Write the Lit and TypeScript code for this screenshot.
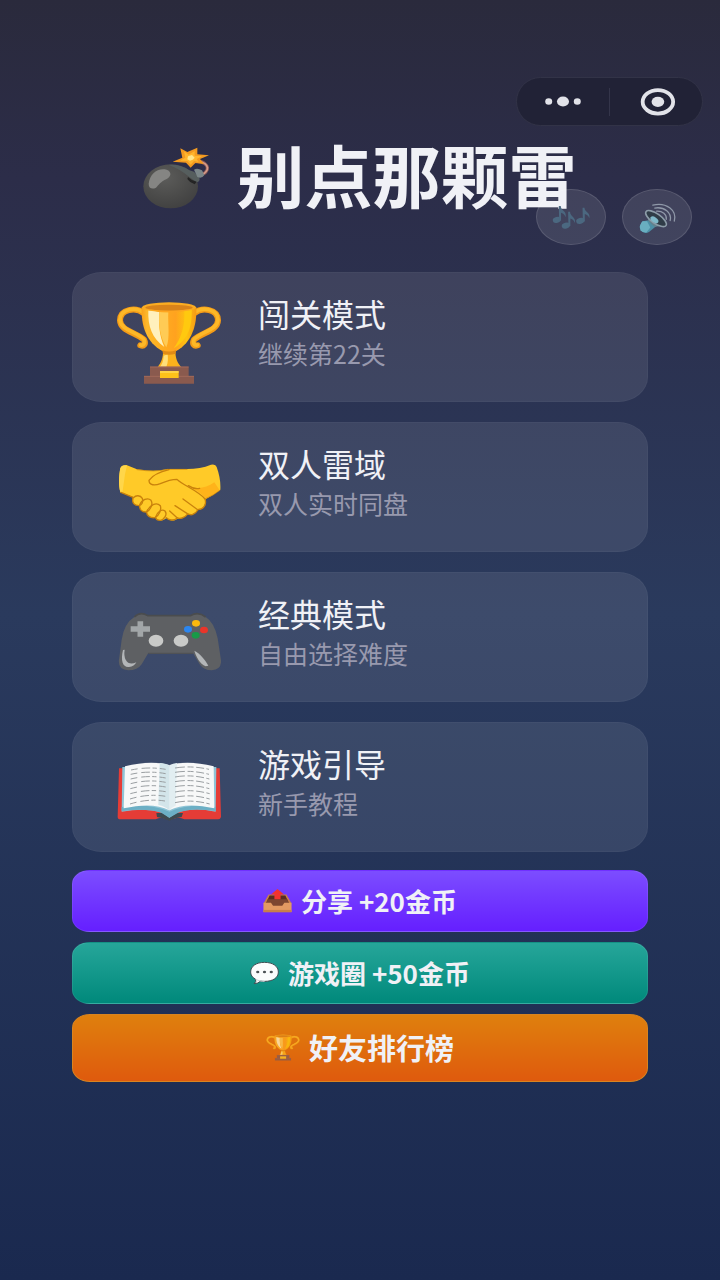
import { LitElement, html, css, svg, TemplateResult } from "lit";
import { customElement, state } from "lit/decorators.js";

interface ModeCard {
  title: string;
  subtitle: string;
  icon: TemplateResult;
}

interface ActionButton {
  label: string;
  kind: string;
  icon: TemplateResult;
}

const trophyShapes = svg`
  <defs>
    <linearGradient id="cup" x1="0" x2="1">
      <stop offset="0" stop-color="#f9a11c" />
      <stop offset="0.1" stop-color="#fdb92c" />
      <stop offset="0.3" stop-color="#ffb020" />
      <stop offset="0.62" stop-color="#ffa21f" />
      <stop offset="0.82" stop-color="#fec20f" />
      <stop offset="1" stop-color="#f59a16" />
    </linearGradient>
  </defs>
  <g fill="none" stroke-linecap="round" stroke-linejoin="round">
    <path d="M250 156C226 138 180 144 179 178C180 210 228 214 251 236C258 250 250 257 240 253" stroke="#f39a17" stroke-width="18" />
    <path d="M249 154C226 137 180 143 179 176C180 207 228 212 250 234C256 246 250 254 241 252" stroke="#fdb827" stroke-width="11" />
    <path d="M402 156C426 138 472 144 473 178C472 210 424 214 401 236C394 250 402 257 412 253" stroke="#f39a17" stroke-width="18" />
    <path d="M403 154C426 137 472 143 473 176C472 207 424 212 402 234C396 246 402 254 411 252" stroke="#fdb827" stroke-width="11" />
  </g>
  <path d="M308 268H345C345 292 351 306 364 320H291C303 304 309 290 308 268Z" fill="#fcb21c" />
  <path d="M310 284C309 300 305 310 298 318H318C324 304 323 292 322 280Z" fill="#ffe07a" />
  <path d="M244 138C242 195 258 244 306 270Q326 279 348 270C394 244 410 195 408 138Z" fill="url(#cup)" />
  <path d="M264 148C262 196 275 232 312 258C297 224 294 190 297 150Z" fill="#fff0bd" />
  <path d="M297 150C294 192 299 228 318 259C330 232 322 188 324 152Z" fill="#ffcb55" />
  <path d="M372 150C374 196 362 232 340 262C384 236 396 196 394 144Z" fill="#ffc90f" />
  <ellipse cx="326" cy="139" rx="81" ry="15" fill="#fbac22" />
  <ellipse cx="326" cy="140" rx="71" ry="9" fill="#d9831a" />
  <path d="M258 143Q326 156 394 143Q326 165 258 143Z" fill="#ffa51f" />
  <path d="M306 268Q326 275 347 268L346 278Q326 284 308 278Z" fill="#e18b16" />
  <path d="M269 317H385V345H401V368H251V345H269Z" fill="#8a5a4e" />
  <path d="M251 346H401M269 318H385" stroke="#a2695a" stroke-width="3" />
  <rect x="299" y="330" width="56" height="21" fill="#fdc11a" />
  <path d="M299 333H355" stroke="#ffdc5c" stroke-width="4" />
`;

const trophyIcon = html`
  <svg viewBox="170 120 312 252" aria-hidden="true">${trophyShapes}</svg>
`;

const handshakeIcon = html`
  <svg viewBox="170 120 312 252" aria-hidden="true">
    <path d="M180 172Q184 160 200 163L230 175Q284 184 322 174H380Q420 174 452 161Q466 158 469 168Q482 204 480 236Q460 252 436 264C434 284 432 294 412 297C404 308 394 312 381 310C374 322 360 322 350 324C338 332 326 328 318 321C308 332 294 330 286 320C270 322 260 314 259 303C246 304 238 296 238 284C222 284 214 276 218 258L180 244C174 220 176 192 180 172Z" fill="#ffca28" />
    <path d="M390 228C416 234 440 230 462 214L478 238Q460 252 436 264C430 252 408 238 390 228Z" fill="#ffb31a" />
    <path d="M180 172Q184 160 200 163L194 190L186 246L180 244C174 220 176 192 180 172Z" fill="#ffd64a" />
    <g fill="none" stroke="#c9820c" stroke-width="4" stroke-linecap="round" stroke-linejoin="round">
      <path d="M326 176C300 182 276 194 266 208C266 224 284 224 300 218C318 210 334 205 350 205C366 222 416 240 434 264C440 282 428 296 412 296L368 264" />
      <path d="M384 224C396 232 408 234 418 232" />
      <path d="M412 297C404 312 392 314 381 308L344 284" />
      <path d="M381 310C372 322 358 324 350 320L328 300" />
      <path d="M350 322C340 330 326 328 318 320" />
      <path d="M182 244L220 260C226 252 240 252 246 262C250 274 244 282 236 284C222 284 214 276 218 260" />
      <path d="M238 282C244 266 262 258 272 268C280 280 268 300 258 303C246 304 236 296 238 282" />
      <path d="M259 302C268 282 288 272 300 284C304 296 296 314 284 320C270 322 258 314 259 302" />
      <path d="M286 318C290 304 304 292 314 300C322 310 312 326 300 328C292 328 286 324 286 318" />
      <path d="M230 176Q284 184 322 175H380" stroke-width="2" />
      <path d="M434 264Q462 252 479 238" stroke-width="2" />
    </g>
  </svg>
`;

const gamepadIcon = html`
  <svg viewBox="170 120 312 252" aria-hidden="true">
    <path d="M222 168Q240 150 262 164H390Q414 150 436 168Q462 184 472 232L482 298Q484 326 454 328Q430 328 418 310L398 276H264L244 310Q232 328 204 328Q172 326 176 296L184 236Q192 186 222 168Z" fill="#5e6063" />
    <path d="M222 168Q240 150 262 164H390Q414 150 436 168" fill="none" stroke="#4a4c4e" stroke-width="5" />
    <path d="M264 277H398" stroke="#505255" stroke-width="4" />
    <path d="M240 181V227M211 204H269" stroke="#a2a6a8" stroke-width="17" />
    <ellipse cx="287" cy="239" rx="22" ry="18" fill="#c9cac8" />
    <ellipse cx="362" cy="239" rx="22" ry="18" fill="#c9cac8" />
    <ellipse cx="407" cy="187" rx="12" ry="10" fill="#fbb90e" />
    <ellipse cx="383" cy="205" rx="12" ry="10" fill="#2b86f0" />
    <ellipse cx="431" cy="207" rx="12" ry="10" fill="#ea3529" />
    <ellipse cx="406" cy="223" rx="12" ry="10" fill="#189a48" />
    <path d="M188 267C180 300 188 320 206 318Q222 316 228 304Q206 314 196 296Q190 284 193 266Z" fill="#b3b6b8" />
    <path d="M402 269C408 288 418 308 436 316L444 314C434 296 420 278 402 269Z" fill="#b3b6b8" />
  </svg>
`;

const bookIcon = html`
  <svg viewBox="170 120 312 252" aria-hidden="true">
    <path d="M176 172H478L482 318Q480 326 472 325H372Q352 314 327 328Q304 314 286 325H180Q172 325 172 318Z" fill="#e53c36" />
    <path d="M288 306H368L364 318Q344 320 327 329Q308 320 290 318Z" fill="#3c4a50" />
    <path d="M186 168H468L466 302Q400 288 352 304L327 320L304 304Q256 290 184 302Z" fill="#8fc4d6" />
    <path d="M184 288Q270 276 327 302Q386 276 466 288V300Q390 288 352 306L327 320L304 306Q262 290 184 300Z" fill="#6cafc5" />
    <path d="M194 166Q270 146 327 162V298Q278 272 190 292Z" fill="#f7f8f8" />
    <path d="M460 166Q384 146 327 162V298Q376 272 462 292Z" fill="#f7f8f8" />
    <path d="M298 156Q316 156 327 164V298Q314 286 294 282Z" fill="#d3e5ea" />
    <path d="M327 164Q338 156 350 156L346 284Q336 288 327 298Z" fill="#e2eef1" />
    <g fill="none" stroke="#9a9fa2" stroke-width="3">
      <path d="M212 177Q264 166 316 175M211 190Q264 178 316 188M211 204Q264 191 316 201M211 218Q264 204 316 214M210 233Q264 218 316 228M210 248Q264 233 316 242M209 264Q264 247 316 256M209 279Q264 262 314 270" stroke-dasharray="20 12 26 7 13 9" />
      <path d="M344 171Q392 163 446 175M344 184Q392 176 446 190M344 198Q392 189 447 204M344 212Q392 203 447 218M344 227Q392 218 447 233M344 243Q392 233 448 248M344 259Q392 248 448 264M344 275Q392 264 448 279" stroke-dasharray="30 8 18 8 24 7" />
    </g>
  </svg>
`;

const bombIcon = html`
  <svg viewBox="45 54 201 186" aria-hidden="true">
    <defs>
      <radialGradient id="iron" cx="0.4" cy="0.3" r="0.75">
        <stop offset="0" stop-color="#5c5c5a" />
        <stop offset="0.6" stop-color="#4b4b4a" />
        <stop offset="1" stop-color="#404040" />
      </radialGradient>
    </defs>
    <path d="M196 98C226 92 248 112 234 128C228 138 216 136 208 130" fill="none" stroke="#8d5c58" stroke-width="10" />
    <path d="M196 98C226 92 248 112 234 128C228 138 216 136 208 130" fill="none" stroke="#d59a88" stroke-width="5" />
    <ellipse cx="128" cy="172" rx="82" ry="66" fill="url(#iron)" />
    <path d="M122 108Q154 104 184 124L198 128L214 146Q218 156 206 160L184 144Q156 120 122 108Z" fill="#565e5e" />
    <path d="M198 122Q208 116 222 124L229 138Q222 150 208 144Z" fill="#7b8688" />
    <path d="M180 144Q192 156 206 158L200 166Q186 162 178 150Z" fill="#242424" />
    <path d="M62 164C66 134 88 116 116 122C132 128 130 142 116 150C98 158 92 168 84 176C72 182 62 178 62 164Z" fill="#858583" />
    <path d="M157 58L178 69L208 56L208 76L243 79L216 90L228 105L202 102L188 116L174 101L134 98L163 86Z" fill="#f39a20" />
    <path d="M168 67L182 77L200 66L200 80L222 82L206 90L212 99L198 96L188 107L178 96L156 95L172 86Z" fill="#ffb52e" />
    <path d="M180 82L192 78L200 86L194 92L186 95L178 91Z" fill="#ffe58a" />
  </svg>
`;

const outboxIcon = html`
  <svg viewBox="103 94 84 70" aria-hidden="true">
    <path d="M119 110H171L186 136H104Z" fill="#c9804a" />
    <path d="M122 113H168L178 135H112Z" fill="#5a2d20" />
    <path d="M116 124H174L178 135V144H112V135Z" fill="#7d4630" />
    <path d="M145 94L164 110H154V124H136V110H126Z" fill="#f2332f" />
    <path d="M104 134H126L132 143H159L165 134H186V161H104Z" fill="#e39a62" />
    <path d="M104 155H186V162H104Z" fill="#c77f4b" />
  </svg>
`;

const speechIcon = html`
  <svg viewBox="59 306 90 72" aria-hidden="true">
    <path d="M104 309C130 309 147 321 147 339C147 357 130 368 104 368Q98 368 92 367Q84 375 72 375Q80 368 76 361C66 356 61 348 61 339C61 321 78 309 104 309Z" fill="#fbfcfc" stroke="#3d4a4f" stroke-width="3" />
    <path d="M76 361C86 367 98 368 104 368" fill="none" stroke="#c7d3d7" stroke-width="3" />
    <g fill="#4b5154">
      <ellipse cx="83" cy="339" rx="5" ry="4" />
      <ellipse cx="104" cy="339" rx="5" ry="4" />
      <ellipse cx="125" cy="339" rx="5" ry="4" />
    </g>
  </svg>
`;

const notesIcon = html`
  <svg viewBox="108 387 212 168" aria-hidden="true">
    <g fill="#4b6880">
      <ellipse cx="170" cy="480" rx="13" ry="9" transform="rotate(-15 170 480)" />
      <ellipse cx="198" cy="498" rx="13" ry="9" transform="rotate(-15 198 498)" />
      <ellipse cx="243" cy="483" rx="13" ry="9" transform="rotate(-15 243 483)" />
      <path d="M176 437H182C182 452 202 452 197 472C194 462 188 459 183 458V481H177Z" />
      <path d="M205 455H211C211 470 231 472 226 490C223 480 217 477 212 476V499H206Z" />
      <path d="M250 442H256C256 456 276 456 271 475C268 466 262 463 257 462V485H251Z" />
    </g>
  </svg>
`;

const speakerIcon = html`
  <svg viewBox="365 387 212 168" aria-hidden="true">
    <path d="M426 484L450 480L468 500L446 518Q432 526 420 512Q413 498 426 484Z" fill="#4d8fa6" />
    <path d="M426 484L440 484L450 504L438 519Q426 520 420 512Q413 498 426 484Z" fill="#69aec0" />
    <path d="M446 486L434 454L500 494L464 502Z" fill="#62818d" />
    <ellipse cx="468" cy="476" rx="38" ry="15" transform="rotate(35 468 476)" fill="#2f3c47" stroke="#8c9ca8" stroke-width="5" />
    <ellipse cx="463" cy="480" rx="14" ry="8" transform="rotate(35 463 480)" fill="#7fb9c9" />
    <g fill="none" stroke="#8f98a8" stroke-width="4" stroke-linecap="round">
      <path d="M470 453C488 452 502 463 500 478" />
      <path d="M464 443C494 438 518 458 512 482" />
      <path d="M458 434C500 424 534 450 525 484" />
    </g>
  </svg>
`;

@customElement("app-root")
export class AppRoot extends LitElement {
  @state() private _musicOn = false;
  @state() private _soundOn = true;

  private _modes: ModeCard[] = [
    { title: "闯关模式", subtitle: "继续第22关", icon: trophyIcon },
    { title: "双人雷域", subtitle: "双人实时同盘", icon: handshakeIcon },
    { title: "经典模式", subtitle: "自由选择难度", icon: gamepadIcon },
    { title: "游戏引导", subtitle: "新手教程", icon: bookIcon },
  ];

  private _actions: ActionButton[] = [
    { label: "分享 +20金币", kind: "share", icon: outboxIcon },
    { label: "游戏圈 +50金币", kind: "club", icon: speechIcon },
    { label: "好友排行榜", kind: "rank", icon: trophyIcon },
  ];

  static styles = css`
    :host {
      display: block;
      box-sizing: border-box;
      min-height: 100vh;
      padding-bottom: 40px;
      background: linear-gradient(#2a2a3c 0%, #2c2d49 14%, #2a3a5d 48%, #1a294f 100%);
      color: #f0f1f6;
      font-family: "Noto Sans CJK SC", "Noto Sans", sans-serif;
    }

    svg {
      display: block;
      width: 100%;
      height: 100%;
    }

    button {
      box-sizing: border-box;
      margin: 0;
      padding: 0;
      border: none;
      background: none;
      color: inherit;
      font: inherit;
      cursor: pointer;
    }

    header {
      position: relative;
      padding-top: 77px;
    }

    .capsule {
      display: flex;
      align-items: center;
      box-sizing: border-box;
      width: 187px;
      height: 49px;
      margin: 0 17px 0 auto;
      border: 1px solid #323347;
      border-radius: 25px;
      background: #212236;
    }

    .capsule button {
      flex: 1;
      height: 100%;
    }

    .capsule .divider {
      width: 1px;
      height: 28px;
      background: #34354a;
    }

    h1 {
      display: flex;
      align-items: center;
      justify-content: center;
      gap: 26px;
      margin: 8px 0 58px;
      font-size: 68px;
      font-weight: 700;
      line-height: 80px;
    }

    .bomb {
      width: 67px;
      height: 62px;
      margin-top: 8px;
    }

    .toggles {
      position: absolute;
      top: 189px;
      right: 28px;
      display: flex;
      gap: 16px;
    }

    .toggles button {
      width: 70px;
      height: 56px;
      border: 1px solid rgba(255, 255, 255, 0.12);
      border-radius: 50%;
      background: rgba(255, 255, 255, 0.1);
    }

    main {
      padding: 0 10%;
    }

    .modes {
      display: grid;
      gap: 20px;
      margin-bottom: 18px;
    }

    .card {
      display: flex;
      align-items: flex-start;
      gap: 37px;
      padding: 20px 44px 28px;
      border: 1px solid rgba(255, 255, 255, 0.03);
      border-radius: 30px / 25px;
      background: rgba(255, 255, 255, 0.09);
      text-align: left;
    }

    .card-icon {
      flex: none;
      width: 104px;
      height: 84px;
      margin: 8px 0 -12px;
    }

    .card-title,
    .card-subtitle {
      display: block;
      line-height: 40px;
    }

    .card-title {
      font-size: 32px;
    }

    .card-subtitle {
      font-size: 25px;
      color: #9899ae;
    }

    .actions {
      display: grid;
      gap: 10px;
    }

    .action {
      display: flex;
      align-items: center;
      justify-content: center;
      gap: 9px;
      padding: 10px;
      border: 1px solid rgba(255, 255, 255, 0.08);
      border-radius: 18px / 14px;
      font-size: 26px;
      font-weight: 700;
      line-height: 40px;
    }

    .action-icon {
      width: 29px;
      height: 24px;
    }

    .share {
      background: linear-gradient(#7c4dff, #651fff);
    }

    .club {
      background: linear-gradient(#26a69a, #00897b);
    }

    .rank {
      padding: 12px 10px 14px;
      border-color: #d9841f;
      background: linear-gradient(#df800d, #df5a0d);
      font-size: 29px;
    }

    .rank .action-icon {
      width: 34px;
      height: 27px;
      opacity: 0.8;
    }
  `;

  render() {
    return html`
      <header>
        <div class="capsule">
          <button aria-label="更多">
            <svg viewBox="0 0 282 148" aria-hidden="true" fill="#e2e3e9">
              <ellipse cx="96" cy="74" rx="11" ry="10" />
              <ellipse cx="141" cy="74" rx="19" ry="16" />
              <ellipse cx="186" cy="74" rx="11" ry="10" />
            </svg>
          </button>
          <span class="divider"></span>
          <button aria-label="关闭">
            <svg viewBox="0 0 282 148" aria-hidden="true">
              <ellipse cx="147" cy="75" rx="48" ry="37" fill="none" stroke="#e2e3e9" stroke-width="12" />
              <ellipse cx="147" cy="75" rx="20" ry="16" fill="#e2e3e9" />
            </svg>
          </button>
        </div>
        <h1><span class="bomb">${bombIcon}</span>别点那颗雷</h1>
        <div class="toggles">
          <button
            aria-label="音乐"
            aria-pressed=${this._musicOn}
            @click=${() => (this._musicOn = !this._musicOn)}
          >
            ${notesIcon}
          </button>
          <button
            aria-label="音效"
            aria-pressed=${this._soundOn}
            @click=${() => (this._soundOn = !this._soundOn)}
          >
            ${speakerIcon}
          </button>
        </div>
      </header>
      <main>
        <nav class="modes">
          ${this._modes.map(
            (mode) => html`
              <button class="card">
                <span class="card-icon">${mode.icon}</span>
                <span>
                  <span class="card-title">${mode.title}</span>
                  <span class="card-subtitle">${mode.subtitle}</span>
                </span>
              </button>
            `
          )}
        </nav>
        <div class="actions">
          ${this._actions.map(
            (action) => html`
              <button class="action ${action.kind}">
                <span class="action-icon">${action.icon}</span>
                <span>${action.label}</span>
              </button>
            `
          )}
        </div>
      </main>
    `;
  }
}

declare global {
  interface HTMLElementTagNameMap {
    "app-root": AppRoot;
  }
}
